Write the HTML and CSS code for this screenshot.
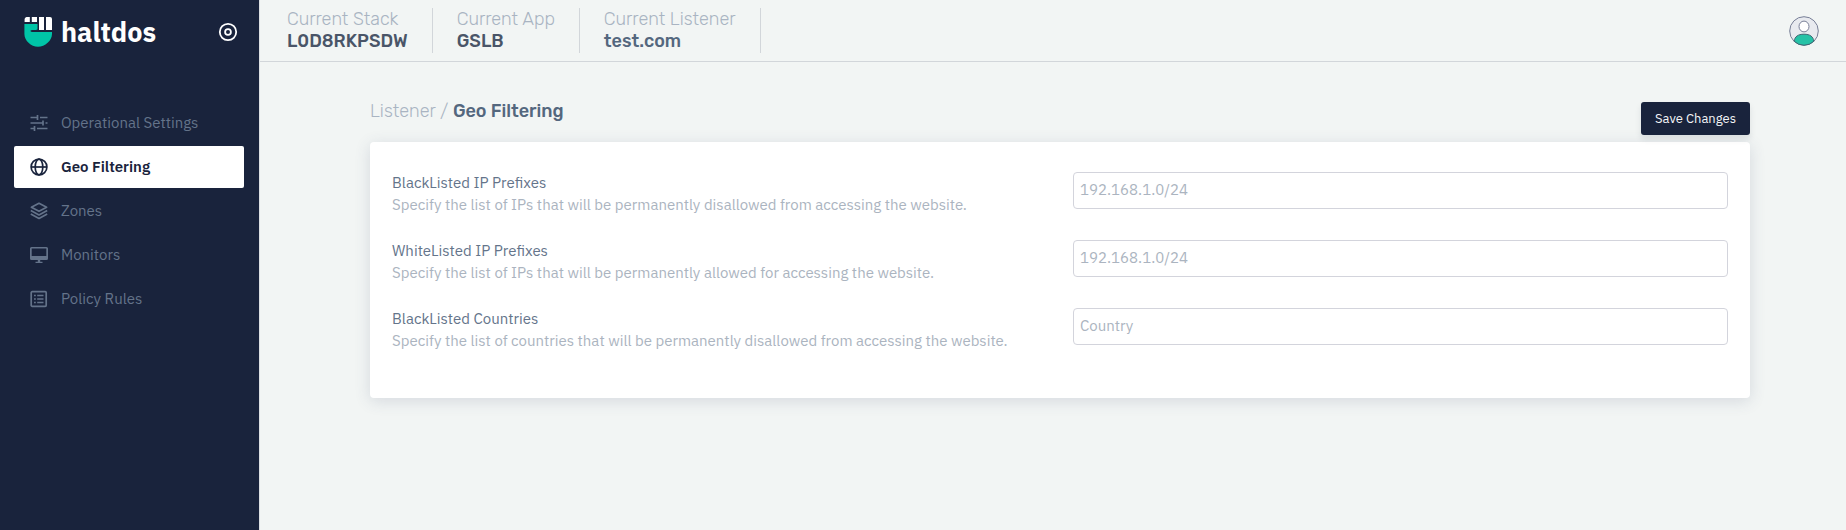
FILE: index.html
```html
<!DOCTYPE html>
<html lang="en">
<head>
<meta charset="utf-8">
<meta name="viewport" content="width=device-width, initial-scale=1">
<title>Geo Filtering</title>
<link rel="stylesheet" href="styles.css">
</head>
<body>
<div class="app">
  <aside class="sidebar">
    <div class="brand">
      <a class="brand-link" href="#">
        <svg class="brand-mark" width="28" height="30" viewBox="0 0 28 30" aria-hidden="true">
          <path fill="#fff" d="M2.500 0H5.800V5H.6V2Q.9.4 2.500 0zM7.800 0H13v5H7.800zM15 0h5v13h-5zM22 0h4q2 0 2 2v11h-6z"/>
          <path fill="#00c4a7" d="M.4 7H13.500v5.500Q12.600 13 8.500 13Q6.400 13 6.400 13.900Q6.600 15 8.500 15H28v2C28 23.500 21 29.800 14 29.800S.4 23.500.4 17z"/>
        </svg>
        <span class="brand-name">haltdos</span>
      </a>
      <button class="pin" type="button" aria-label="Toggle sidebar">
        <svg width="20" height="20" viewBox="0 0 20 20" fill="none" stroke="#fff" stroke-width="1.800" aria-hidden="true">
          <circle cx="10" cy="10" r="8.200"/><circle cx="10" cy="10" r="2.900"/>
        </svg>
      </button>
    </div>
    <nav class="nav">
      <a class="nav-item" href="#">
        <svg class="icon" viewBox="0 0 18 18" fill="none" stroke="currentColor" stroke-width="1.700" aria-hidden="true"><path d="M.5 3.500H8M7.500 1v5M10 3.500H17.500M.5 9H12.500M13 6.500v5M15.500 9h2M.5 14.500H4.500M4.500 12v5M7 14.500h10.500"/></svg>
        Operational Settings
      </a>
      <a class="nav-item active" href="#" aria-current="page">
        <svg class="icon" viewBox="0 0 18 18" fill="none" stroke="currentColor" stroke-width="1.700" aria-hidden="true"><circle cx="9" cy="9" r="7.900"/><ellipse cx="9" cy="9" rx="3.800" ry="7.900"/><path d="M1 9h16"/></svg>
        Geo Filtering
      </a>
      <a class="nav-item" href="#">
        <svg class="icon" viewBox="0 0 18 18" fill="none" stroke="currentColor" stroke-width="1.700" stroke-linejoin="round" aria-hidden="true"><path d="M9 1.300L16.600 5.300L9 9.300L1.400 5.300z"/><path d="M.8 8.500L9 12.900L17.200 8.500M.8 12L9 16.500L17.200 12"/></svg>
        Zones
      </a>
      <a class="nav-item" href="#">
        <svg class="icon" viewBox="0 0 18 18" fill="currentColor" aria-hidden="true"><path fill-rule="evenodd" d="M1.500 1h15Q18 1 18 2.500v10Q18 14 16.500 14h-6.300v1.700H12.500V17h-7v-1.300h2.300V14H1.500Q0 14 0 12.500v-10Q0 1 1.500 1zM1.700 2.500V10h14.600V2.500z"/></svg>
        Monitors
      </a>
      <a class="nav-item" href="#">
        <svg class="icon" viewBox="0 0 18 18" fill="none" stroke="currentColor" stroke-width="1.700" aria-hidden="true"><rect x="1.200" y="1.700" width="15" height="14.600" rx="1"/><path d="M4 5.500h1.800M7.200 5.500h6.300M4 9h1.800M7.200 9h6.300M4 12.500h1.800M7.200 12.500h6.300"/></svg>
        Policy Rules
      </a>
    </nav>
  </aside>

  <div class="content">
    <header class="topbar">
      <dl class="context">
        <div class="context-item"><dt>Current Stack</dt><dd class="strong">L0D8RKPSDW</dd></div>
        <div class="context-item"><dt>Current App</dt><dd class="strong">GSLB</dd></div>
        <div class="context-item"><dt>Current Listener</dt><dd>test.com</dd></div>
      </dl>
      <button class="avatar" type="button" aria-label="Account">
        <svg width="30" height="30" viewBox="0 0 30 30" stroke-width="1" aria-hidden="true">
          <circle cx="15" cy="15" r="14.300" fill="#e8eaef" stroke="#777e96"/>
          <ellipse cx="15" cy="10.500" rx="5" ry="5.400" fill="#fff" stroke="#777e96"/>
          <path d="M5.200 25.300C5.800 20.500 9 18.200 15 18.200s9.200 2.300 9.800 7.100A14.200 14.200 0 0 1 5.200 25.300z" fill="#26c2a6" stroke="#3f6874"/>
        </svg>
      </button>
    </header>

    <main class="page">
      <div class="page-head">
        <h1 class="crumbs"><a href="#">Listener</a> / <span>Geo Filtering</span></h1>
        <button class="save" type="submit" form="geo-form">Save Changes</button>
      </div>
      <form class="card" id="geo-form">
        <div class="row">
          <div class="row-text">
            <label for="black-ip">BlackListed IP Prefixes</label>
            <p id="black-ip-help">Specify the list of IPs that will be permanently disallowed from accessing the website.</p>
          </div>
          <input id="black-ip" type="text" placeholder="192.168.1.0/24" aria-describedby="black-ip-help">
        </div>
        <div class="row">
          <div class="row-text">
            <label for="white-ip">WhiteListed IP Prefixes</label>
            <p id="white-ip-help">Specify the list of IPs that will be permanently allowed for accessing the website.</p>
          </div>
          <input id="white-ip" type="text" placeholder="192.168.1.0/24" aria-describedby="white-ip-help">
        </div>
        <div class="row">
          <div class="row-text">
            <label for="countries">BlackListed Countries</label>
            <p id="countries-help">Specify the list of countries that will be permanently disallowed from accessing the website.</p>
          </div>
          <input id="countries" type="text" placeholder="Country" aria-describedby="countries-help">
        </div>
      </form>
    </main>
  </div>
</div>
</body>
</html>
```

FILE: styles.css
```css
* { box-sizing: border-box; }

body {
  margin: 0;
  background: #f2f5f4;
  color: #718096;
  font-family: "IBM Plex Sans", Roboto, sans-serif;
  font-size: 15px;
  line-height: 22px;
}

a { color: inherit; text-decoration: none; }

button {
  border: 0;
  padding: 0;
  background: none;
  font: inherit;
  cursor: pointer;
}

.app { display: flex; min-height: 100vh; }

.sidebar {
  flex: 0 0 260px;
  border-right: 1px solid #dcdfe3;
  background: #19233c;
}

.brand {
  display: flex;
  align-items: center;
  justify-content: space-between;
  height: 64px;
  padding: 0 21px 0 24px;
}

.brand-link { display: flex; align-items: center; gap: 9px; }

.brand-name {
  color: #fff;
  font-size: 27px;
  font-weight: 700;
  line-height: 32px;
}

.pin { display: flex; }

.nav {
  display: flex;
  flex-direction: column;
  gap: 2px;
  padding: 38px 15px 38px 14px;
}

.nav-item {
  display: flex;
  align-items: center;
  gap: 13px;
  height: 42px;
  padding: 0 16px;
  border-radius: 2px;
  color: #64738a;
}

.nav-item.active { background: #fff; color: #19233c; font-weight: 600; }

.icon { width: 18px; height: 18px; }

.content { flex: 1; min-width: 0; }

.topbar {
  display: flex;
  align-items: center;
  justify-content: space-between;
  height: 62px;
  padding: 0 27px 0 3px;
  border-bottom: 1px solid #d2d6da;
}

.context { display: flex; margin: 0; }

.context-item {
  padding: 0 24px 1px;
  border-right: 1px solid #d2d6da;
  font-family: Rubik, Roboto, sans-serif;
  font-size: 18px;
  line-height: 22px;
}

.context-item dt { color: #a9b4c2; font-weight: 300; }
.context-item dd { margin: 0; color: #54677e; font-weight: 500; }
.context-item .strong { color: #4a5568; }

.avatar { display: flex; }

.page { padding: 38px 96px 38px 110px; }

.page-head {
  display: flex;
  justify-content: space-between;
  align-items: flex-start;
  height: 42px;
}

.crumbs {
  margin: 0;
  color: #a9b4c2;
  font-family: Rubik, Roboto, sans-serif;
  font-size: 18px;
  font-weight: 300;
}

.crumbs span { color: #54677e; font-weight: 500; }

.save {
  height: 33px;
  margin-top: 2px;
  padding: 0 14px;
  border-radius: 3px;
  background: #19233c;
  box-shadow: 0 4px 6px rgba(25, 35, 60, 0.1);
  color: #f4f5f7;
  font-size: 13px;
}

.card {
  display: flex;
  flex-direction: column;
  gap: 24px;
  padding: 30px 22px 46px;
  border-radius: 4px;
  background: #fff;
  box-shadow: 0 3px 16px rgba(60, 75, 110, 0.16);
}

.row {
  display: grid;
  grid-template-columns: 1fr 1fr;
  gap: 26px;
  align-items: start;
}

.row-text label { display: block; color: #64748a; }
.row-text p { margin: 0; color: #abb4c0; }

.row input {
  width: 100%;
  height: 37px;
  padding: 0 6px 2px;
  border: 1px solid #d3d4dc;
  border-radius: 4px;
  background: #fff;
  color: #64748a;
  font: inherit;
}

.row input::placeholder { color: #abb4c0; opacity: 1; }
```
